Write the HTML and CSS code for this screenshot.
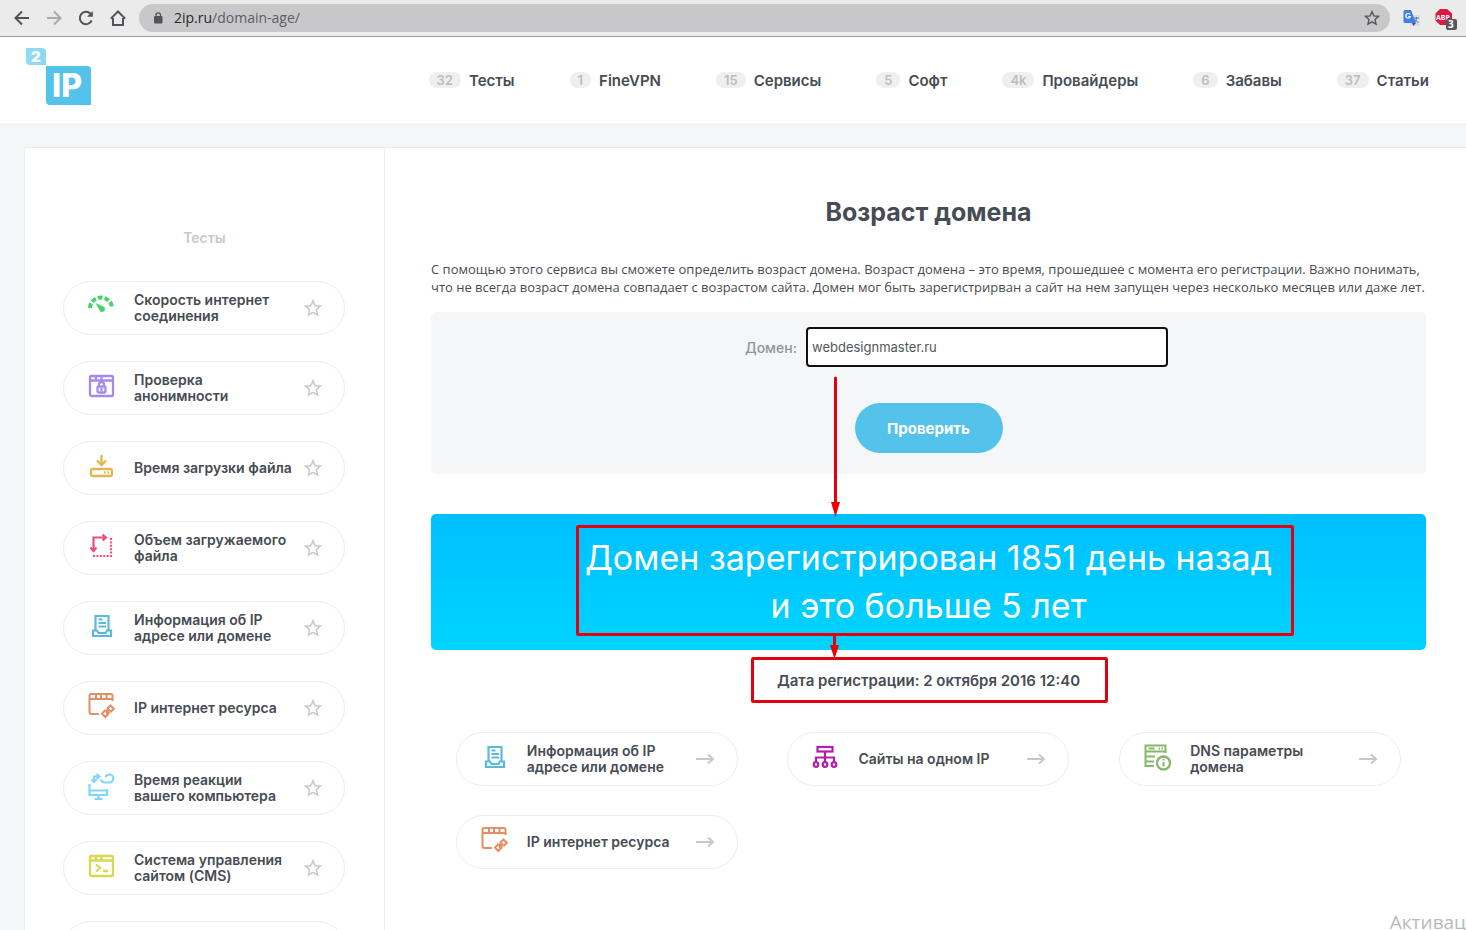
FILE: index.html
```html
<!DOCTYPE html>
<html lang="ru">
<head>
<meta charset="utf-8">
<title>Возраст домена</title>
<link rel="stylesheet" href="styles.css">
</head>
<body>
<svg class="sprite" aria-hidden="true">
  <symbol id="star" viewBox="0 0 18 18"><path d="M9 1.800l2.100 4.900 5.300.5-4 3.600 1.200 5.200L9 13.300 4.400 16l1.200-5.200-4-3.600 5.300-.5z" fill="none" stroke="currentColor" stroke-width="1.500"/></symbol>
  <symbol id="arrow" viewBox="0 0 20 12"><path d="M1 6h17M13 1.500L18 6l-5 4.500" fill="none" stroke="currentColor" stroke-width="2"/></symbol>
  <symbol id="speed" viewBox="0 0 28 28"><path d="M3 16a11 10.500 0 0 1 22 0" fill="none" stroke="currentColor" stroke-width="4" stroke-dasharray="4.700 2.100"/><path d="M8.500 11l7.300 3.200a2.900 2.900 0 1 1-3.500 3.500z" fill="currentColor"/></symbol>
  <symbol id="anon" viewBox="0 0 28 28"><g fill="none" stroke="currentColor" stroke-width="2.300"><rect x="3" y="4" width="23" height="20" rx="1.500"/><path d="M3 8.500h23M9 4v4M14.500 4v4"/><rect x="10.500" y="14.500" width="8" height="6" rx="1"/><path d="M12 14v-1.500a2.500 2.500 0 0 1 5 0V14M14.500 16v3"/></g></symbol>
  <symbol id="download" viewBox="0 0 28 28"><g fill="none" stroke="currentColor" stroke-width="2.300"><rect x="4" y="17" width="21" height="7" rx="2"/><path d="M14.500 3v9M10 8.500l4.500 4.500L19 8.500M17 20.500h1.500M20.500 20.500H22"/></g></symbol>
  <symbol id="size" viewBox="0 0 28 28"><g fill="none" stroke="currentColor" stroke-width="2.200"><path d="M6.500 18V5.500H19M15.500 2.500l3.500 3-3.500 3M3.500 15.500l3 3.500 3-3.500"/><path d="M24 6v18H6" stroke-dasharray="2 1.400"/></g></symbol>
  <symbol id="info" viewBox="0 0 28 28"><g fill="none" stroke="currentColor" stroke-width="2.200"><path d="M8.500 19V4h13v15M11.500 7.500h4M11.500 11h7.500M11.500 14.500h7.500"/><path d="M10 18.500H6V24h18v-5.500h-4l-1.500 2.500h-7z"/></g></symbol>
  <symbol id="resource" viewBox="0 0 28 28"><g fill="none" stroke="currentColor" stroke-width="2"><path d="M12 22H4.500Q2.500 22 2.500 20V3.500Q2.500 2 4 2h20q1.500 0 1.500 1.500V9M2.500 7h23M9 2v4M14 2v4M19.500 2v4"/><path d="M20 17l3.500-3.500 3.300 3.300-3.500 3.500M18.500 18l-3.500 3.500 3.300 3.500 3.500-3.500M19 21.500l4-4M18.500 18l4 3.500M20 17l2 2"/></g></symbol>
  <symbol id="reaction" viewBox="0 0 28 28"><g fill="none" stroke="currentColor" stroke-width="2.200"><path d="M2.500 12v11h17.500v-6M2.500 18.500h17.500M11.500 23v3.500M7.500 27h8"/><path d="M7 10V4.500h4M9.500 2l3 2.500-3 2.500M4.500 7.500L7 10l2.500-2.500M14 7.500q1 3 4 3h4.500a3.900 3.900 0 1 0-.5-8q-2.500 0-3.500 2.500"/></g></symbol>
  <symbol id="cms" viewBox="0 0 28 28"><g fill="none" stroke="currentColor" stroke-width="2.300"><rect x="3" y="4" width="23" height="20" rx="1.500"/><path d="M3 8.500h23M9 4v4M14.500 4v4M9 12.500l4 3.500-4 3.500M16 19h5"/></g></symbol>
  <symbol id="sites" viewBox="0 0 28 28"><g fill="none" stroke="currentColor" stroke-width="2.200"><rect x="6.500" y="4" width="15" height="4.500"/><path d="M14 9v10M5 19v-4.500h18V19"/><circle cx="5" cy="21.500" r="2.300"/><circle cx="14" cy="21.500" r="2.300"/><circle cx="23" cy="21.500" r="2.300"/></g></symbol>
  <symbol id="dns" viewBox="0 0 28 28"><g fill="none" stroke="currentColor" stroke-width="2"><path d="M11 23H2.500V2.500h20V10M2.500 8.500h20M2.500 13.500H12M2.500 18.500H11M5.500 5.500h6M15.500 5.500h1.500M18.500 5.500H20"/><circle cx="20.500" cy="20" r="6.500" stroke-width="2.300"/><path d="M20.500 15.800v1.700M20.500 19v4.500"/></g></symbol>
</svg>

<div class="browser">
  <div class="browser-nav">
    <button class="tool" aria-label="Назад"><svg viewBox="0 0 16 16"><path d="M15 8H2M8 1.500L1.500 8 8 14.500"/></svg></button>
    <button class="tool tool-off" aria-label="Вперёд"><svg viewBox="0 0 16 16"><path d="M1 8h13M8 1.500L14.500 8 8 14.500"/></svg></button>
    <button class="tool" aria-label="Обновить"><svg viewBox="0 0 16 16"><path d="M13.700 10.500A6.200 6.200 0 1 1 12.500 3.700L14 5.500"/><path d="M14.800 1v5.800H9z" class="solid"/></svg></button>
    <button class="tool" aria-label="Домой"><svg viewBox="0 0 16 16"><path d="M3 8v7h10V8M.8 8.600L8 1.500l7.200 7.100"/></svg></button>
  </div>
  <div class="address">
    <svg class="lock" viewBox="0 0 10 12"><rect x="1" y="4" width="8.500" height="7.500" rx="1" fill="#505357"/><path d="M3 5V3.200a2.200 2.200 0 0 1 4.500 0V5" fill="none" stroke="#505357" stroke-width="1.300"/></svg>
    <span class="url"><span class="url-host">2ip.ru</span>/domain-age/</span>
    <svg class="bookmark" viewBox="0 0 18 18"><use href="#star"/></svg>
  </div>
  <svg class="ext" viewBox="0 0 18 18"><rect x="7" y="6" width="10" height="11" rx="1" fill="#d9dde1"/><path d="M2 1h6l5 13H2a1.500 1.500 0 0 1-1.500-1.500v-10A1.500 1.500 0 0 1 2 1z" fill="#3f7fe8"/><path d="M9 14h4l-2.500 3z" fill="#2a56c6"/><path d="M7 5.500A2.300 2.300 0 1 0 7.300 7.500H5.200" fill="none" stroke="#fff" stroke-width="1.200"/><path d="M11 9h5M13.500 8v1c0 2-1 3.500-2.500 4.500M12 10.500l3.500 3.500" fill="none" stroke="#52808c" stroke-width="1"/></svg>
  <svg class="ext ext-abp" viewBox="0 0 24 24"><path d="M6 3h7l5 4.500v7L13 19H6l-4.500-4.500v-7z" fill="#e2173d"/><text x="2" y="14" class="abp">ABP</text><rect x="12" y="13" width="11" height="11" rx="2" fill="#565759"/><text x="14" y="22" class="count">3</text></svg>
</div>

<header class="header">
  <a href="#" class="logo" aria-label="2IP"><svg viewBox="0 0 66 58"><path d="M0 0h16a4 4 0 0 1 4 4v13H4a4 4 0 0 1-4-4z" fill="#8fd9f3"/><path d="M20 18h41a4 4 0 0 1 4 4v35H24a4 4 0 0 1-4-4z" fill="#54c3ec"/><text x="5" y="14" class="logo-two">2</text><text x="26" y="49" class="logo-ip">IP</text></svg></a>
  <nav class="menu">
    <a href="#"><span class="badge">32</span>Тесты</a>
    <a href="#"><span class="badge">1</span>FineVPN</a>
    <a href="#"><span class="badge">15</span>Сервисы</a>
    <a href="#"><span class="badge">5</span>Софт</a>
    <a href="#"><span class="badge">4k</span>Провайдеры</a>
    <a href="#"><span class="badge">6</span>Забавы</a>
    <a href="#"><span class="badge">37</span>Статьи</a>
  </nav>
</header>

<div class="page">
  <aside class="sidebar">
    <h2 class="sidebar-title">Тесты</h2>
    <a href="#" class="pill"><svg class="icon green"><use href="#speed"/></svg><span class="pill-text">Скорость интернет<br>соединения</span><svg class="star"><use href="#star"/></svg></a>
    <a href="#" class="pill"><svg class="icon violet"><use href="#anon"/></svg><span class="pill-text">Проверка<br>анонимности</span><svg class="star"><use href="#star"/></svg></a>
    <a href="#" class="pill"><svg class="icon gold"><use href="#download"/></svg><span class="pill-text">Время загрузки файла</span><svg class="star"><use href="#star"/></svg></a>
    <a href="#" class="pill"><svg class="icon pink"><use href="#size"/></svg><span class="pill-text">Объем загружаемого<br>файла</span><svg class="star"><use href="#star"/></svg></a>
    <a href="#" class="pill"><svg class="icon blue"><use href="#info"/></svg><span class="pill-text">Информация об IP<br>адресе или домене</span><svg class="star"><use href="#star"/></svg></a>
    <a href="#" class="pill"><svg class="icon orange"><use href="#resource"/></svg><span class="pill-text">IP интернет ресурса</span><svg class="star"><use href="#star"/></svg></a>
    <a href="#" class="pill"><svg class="icon sky"><use href="#reaction"/></svg><span class="pill-text">Время реакции<br>вашего компьютера</span><svg class="star"><use href="#star"/></svg></a>
    <a href="#" class="pill"><svg class="icon lime"><use href="#cms"/></svg><span class="pill-text">Система управления<br>сайтом (CMS)</span><svg class="star"><use href="#star"/></svg></a>
    <div class="pill"></div>
  </aside>

  <main class="content">
    <h1 class="title">Возраст домена</h1>
    <p class="intro">С помощью этого сервиса вы сможете определить возраст домена. Возраст домена – это время, прошедшее с момента его регистрации. Важно понимать,<br>что не всегда возраст домена совпадает с возрастом сайта. Домен мог быть зарегистрирван а сайт на нем запущен через несколько месяцев или даже лет.</p>
    <form class="form">
      <div class="field">
        <label for="domain">Домен:</label>
        <input id="domain" type="text" value="webdesignmaster.ru">
      </div>
      <button type="button" class="submit">Проверить</button>
    </form>
    <div class="result">Домен зарегистрирован 1851 день назад<br>и это больше 5 лет</div>
    <p class="date">Дата регистрации: 2 октября 2016 12:40</p>
    <div class="related">
      <a href="#" class="pill"><svg class="icon blue"><use href="#info"/></svg><span class="pill-text">Информация об IP<br>адресе или домене</span><svg class="arrow"><use href="#arrow"/></svg></a>
      <a href="#" class="pill"><svg class="icon purple"><use href="#sites"/></svg><span class="pill-text">Сайты на одном IP</span><svg class="arrow"><use href="#arrow"/></svg></a>
      <a href="#" class="pill"><svg class="icon olive"><use href="#dns"/></svg><span class="pill-text">DNS параметры<br>домена</span><svg class="arrow"><use href="#arrow"/></svg></a>
      <a href="#" class="pill"><svg class="icon orange"><use href="#resource"/></svg><span class="pill-text">IP интернет ресурса</span><svg class="arrow"><use href="#arrow"/></svg></a>
    </div>
    <svg class="marks" viewBox="0 0 720 328" aria-hidden="true">
      <g fill="none" stroke="#e3000f" stroke-width="3"><path d="M259.500 2v126" stroke-linecap="round"/><rect x="1.500" y="150.500" width="715" height="108" rx="1"/><path d="M258.500 260v12"/><rect x="176.500" y="282.500" width="354" height="43" rx="1"/></g>
      <path d="M255 126h9L259.500 141zM254 269h9L258.500 283z" fill="#f00000"/>
    </svg>
  </main>
</div>
<div class="watermark">Активац</div>
</body>
</html>
```

FILE: styles.css
```css
* { box-sizing: border-box; }

body {
  margin: 0;
  height: 100vh;
  overflow: hidden;
  position: relative;
  display: flex;
  flex-direction: column;
  background: #f5f6f8;
  color: #464c53;
  font-family: Inter, "Open Sans", sans-serif;
  font-size: 14px;
}

a { color: inherit; text-decoration: none; }
button { border: 0; padding: 0; background: none; font: inherit; }
.sprite { position: absolute; width: 0; height: 0; }

/* Browser toolbar */
.browser {
  flex: none;
  display: flex;
  align-items: center;
  gap: 13px;
  height: 37px;
  padding: 0 8px 0 14px;
  background: #ebebeb;
  border-bottom: 1px solid #9a9b9c;
}
.browser-nav { display: flex; gap: 16px; }
.tool { width: 16px; height: 16px; }
.tool svg { display: block; fill: none; stroke: #505357; stroke-width: 2; }
.tool-off svg { stroke: #a8a9ab; }
.tool .solid { fill: #505357; stroke: none; }
.address {
  flex: 1;
  display: flex;
  align-items: center;
  height: 28px;
  padding: 0 10px 0 14px;
  border-radius: 14px;
  background: #c8c8ca;
}
.lock { width: 10px; height: 12px; }
.url {
  flex: 1;
  margin-left: 11px;
  color: #5b5e62;
  font-family: "Open Sans", sans-serif;
  line-height: 20px;
}
.url-host { color: #26282b; }
.bookmark { width: 16px; height: 16px; color: #505357; }
.ext { width: 18px; height: 18px; }
.ext-abp { width: 24px; height: 24px; }
.abp { font: 700 7px "Open Sans", sans-serif; fill: #fff; }
.count { font: 700 10px "Open Sans", sans-serif; fill: #fff; }

/* Site header */
.header {
  flex: none;
  display: flex;
  align-items: center;
  justify-content: space-between;
  height: 86px;
  padding: 0 37px 0 26px;
  background: #fff;
}
.logo { padding-bottom: 6px; }
.logo svg { display: block; width: 66px; height: 58px; }
.logo-two { font: 900 15px Inter, sans-serif; fill: #fff; }
.logo-ip { font: 800 32px Inter, sans-serif; fill: #fff; }
.menu {
  display: flex;
  gap: 55px;
  font-size: 15px;
  font-weight: 600;
}
.menu a { display: flex; align-items: center; gap: 8px; }
.badge {
  padding: 0 8px;
  border-radius: 8px;
  background: #eeeff0;
  color: #b9bec2;
  font-size: 13px;
  line-height: 16px;
}

/* Columns */
.page {
  flex: 1;
  min-height: 0;
  display: flex;
  margin: 24px 0 0 24px;
  border: solid #ebedef;
  border-width: 1px 0 0 1px;
  background: #fff;
}
.sidebar {
  flex: none;
  width: 360px;
  padding: 80px 38px 0;
  border-right: 1px solid #ebedef;
}
.sidebar-title {
  margin: 0 0 34px;
  color: #c6cacd;
  font-size: 14px;
  font-weight: 600;
  line-height: 19px;
  text-align: center;
}
.pill {
  display: flex;
  align-items: center;
  width: 282px;
  height: 54px;
  padding: 0 22px 0 23px;
  border: 1px solid #ebedee;
  border-radius: 27px;
  font-weight: 600;
  line-height: 16px;
}
.sidebar .pill { margin-bottom: 26px; }
.pill-text { flex: 1; margin-left: 19px; white-space: nowrap; }
.icon { flex: none; width: 28px; height: 28px; margin-bottom: 4px; }
.star { flex: none; width: 18px; height: 18px; color: #c5c9cc; }
.arrow { flex: none; width: 20px; height: 12px; color: #c5c7ca; }

.green { color: #42d565; }
.violet { color: #a78ae8; }
.gold { color: #e0b64d; }
.pink { color: #e9517c; }
.blue { color: #5bb9df; }
.orange { color: #e58d64; }
.sky { color: #82d4f8; }
.lime { color: #d9d950; }
.purple { color: #b01fa5; }
.olive { color: #87b768; }

/* Domain age */
.content {
  flex: 1;
  min-width: 0;
  position: relative;
  padding: 48px 40px 0 46px;
}
.title {
  margin: 0 0 32px;
  font-size: 25px;
  font-weight: 700;
  line-height: 32px;
  text-align: center;
}
.intro {
  margin: 0 0 16px;
  font-family: "Open Sans", sans-serif;
  font-size: 13px;
  line-height: 18px;
  white-space: nowrap;
}
.form {
  display: flex;
  flex-direction: column;
  align-items: center;
  gap: 36px;
  padding: 15px 0 21px;
  border-radius: 5px;
  background: #f5f6f8;
}
.field {
  align-self: stretch;
  display: grid;
  grid-template-columns: 366fr 362fr 249fr;
  column-gap: 9px;
  align-items: center;
}
.field label { color: #939699; font-weight: 500; text-align: right; }
.field input {
  width: 100%;
  height: 40px;
  padding: 0 4px;
  border: 2px solid #101010;
  border-radius: 4px;
  outline: 0;
  background: #fff;
  color: #51565c;
  font: inherit;
  font-size: 13px;
}
.submit {
  width: 148px;
  height: 50px;
  border-radius: 25px;
  background: #54c3ec;
  color: #fff;
  font-size: 15px;
  font-weight: 700;
}
.result {
  margin-top: 40px;
  padding: 20px 0;
  border-radius: 5px;
  background: linear-gradient(#00bfff, #00d4ff);
  color: #fff;
  font-size: 34px;
  line-height: 48px;
  text-align: center;
}
.date {
  margin: 21px 0 41px;
  font-size: 15px;
  font-weight: 600;
  line-height: 20px;
  text-align: center;
}
.related {
  display: grid;
  grid-template-columns: repeat(3, 1fr);
  row-gap: 29px;
  justify-items: center;
}
.marks {
  position: absolute;
  top: 228px;
  left: 191px;
  width: 720px;
  height: 328px;
  pointer-events: none;
}
.watermark {
  position: absolute;
  right: 0;
  bottom: 0;
  color: #b9b9b9;
  font-family: "Open Sans", sans-serif;
  font-size: 19px;
  line-height: 16px;
}
```
